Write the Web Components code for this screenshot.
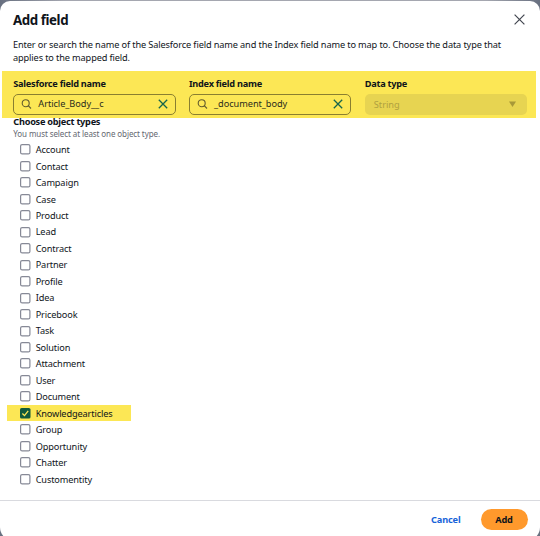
<!DOCTYPE html>
<html lang="en">
<head>
<meta charset="utf-8">
<title>Add field</title>
<style>
  html, body { margin: 0; height: 100%; overflow: hidden; }
  body {
    background: linear-gradient(90deg, #687080, #a5a7b0 12%, #a5a7b0 90%, #687080);
    background-color: #687080;
    font-family: "Noto Sans", "Open Sans", sans-serif;
    font-size: 9.2px;
    color: #0f141a;
  }
</style>
</head>
<body>
<field-modal>
  <span slot="title">Add field</span>
  <span slot="intro">Enter or search the name of the Salesforce field name and the Index field name to map to. Choose the data type that<br>applies to the mapped field.</span>
  <search-field slot="fields" label="Salesforce field name" value="Article_Body__c"></search-field>
  <search-field slot="fields" label="Index field name" value="_document_body"></search-field>
  <select-field slot="fields" label="Data type" value="String"></select-field>
  <object-types slot="types"></object-types>
</field-modal>

<script>
// <field-modal>: dialog frame with title, intro, field row, list and footer
class FieldModal extends HTMLElement {
  constructor() {
    super();
    this.attachShadow({ mode: "open" });
    this.shadowRoot.innerHTML = `
      <style>
        :host { display: block; padding-top: 1px; height: 535px; }
        .box { display: flex; flex-direction: column; box-sizing: border-box;
               height: 540px; background: #fff; border-radius: 10px 10px 14px 14px; }
        header { display: flex; justify-content: space-between; align-items: center;
                 height: 36px; padding: 0 15px 0 13px; }
        h1 { margin: 0; padding-top: 1.4px; font-size: 13.3px; font-weight: 700; line-height: 18px;
             letter-spacing: -.42px; }
        header svg { width: 11px; height: 11px; }
        .intro { margin: 0; padding: 1px 13px 0; line-height: 13.3px; height: 32.5px;
                 white-space: nowrap; letter-spacing: -.125px; }
        .fields { display: flex; gap: 13.5px; box-sizing: border-box; height: 47.3px;
                  margin: 0 4px 0 2px; padding: 6.5px 9px 0 11.3px; background: #fce755; }
        main { flex: 1; }
        footer { display: flex; justify-content: flex-end; align-items: center; gap: 20px;
                 box-sizing: border-box; height: 41px; padding: 0 12.5px 3px 0;
                 border-top: 1px solid #d9dadf; font-weight: 700; letter-spacing: -.15px; }
        .cancel { color: #1764d9; }
        .add { width: 47px; height: 21px; line-height: 21px; border-radius: 11px;
               text-align: center; background: #ff992c; }
      </style>
      <div class="box">
        <header>
          <h1><slot name="title"></slot></h1>
          <svg viewBox="0 0 11 11"><path d="M.6.6l9.8 9.8M10.4.6L.6 10.4" stroke="#424650" stroke-width="1.2"/></svg>
        </header>
        <p class="intro"><slot name="intro"></slot></p>
        <div class="fields"><slot name="fields"></slot></div>
        <main><slot name="types"></slot></main>
        <footer>
          <span class="cancel">Cancel</span>
          <span class="add">Add</span>
        </footer>
      </div>
    `;
  }
}

// <search-field label value>: text input with magnifier and clear icon
class SearchField extends HTMLElement {
  constructor() {
    super();
    this.attachShadow({ mode: "open" });
    this.shadowRoot.innerHTML = `
      <style>
        :host { display: block; flex: 1; }
        .label { font-weight: 700; line-height: 14px; margin-bottom: 2.5px; white-space: nowrap; letter-spacing: -.26px; }
        .input { display: flex; align-items: center; box-sizing: border-box; height: 21px;
                 padding: 0 7px; border: 1.4px solid #8a7f30; border-radius: 5px; color: #2b2b1c; }
        .value { flex: 1; margin-left: 7px; line-height: 18px; letter-spacing: -.04px; }
        svg { width: 10px; height: 10px; fill: none; overflow: visible; }
      </style>
      <div class="label"></div>
      <div class="input">
        <svg viewBox="0 0 10 10" stroke="#625c2e" stroke-width="1.1"><circle cx="4.7" cy="4.2" r="3.5"/><path d="M7.2 6.7L10 9.5"/></svg>
        <span class="value"></span>
        <svg viewBox="0 0 10 10" stroke="#17664b" stroke-width="1.3"><path d="M.8.8l8.4 8.4M9.2.8L.8 9.2"/></svg>
      </div>
    `;
  }

  connectedCallback() {
    this.shadowRoot.querySelector(".label").textContent = this.getAttribute("label");
    this.shadowRoot.querySelector(".value").textContent = this.getAttribute("value");
  }
}

// <select-field label value>: disabled dropdown
class SelectField extends HTMLElement {
  constructor() {
    super();
    this.attachShadow({ mode: "open" });
    this.shadowRoot.innerHTML = `
      <style>
        :host { display: block; flex: 1; }
        .label { font-weight: 700; line-height: 14px; margin-bottom: 2.5px; letter-spacing: -.26px; }
        .select { display: flex; align-items: center; justify-content: space-between;
                  box-sizing: border-box; height: 21px; padding: 0 11px 0 9px;
                  border-radius: 5px; background: #e7d451; color: #b0a140; }
        svg { width: 7px; height: 6px; }
      </style>
      <div class="label"></div>
      <div class="select">
        <span class="value"></span>
        <svg viewBox="0 0 7 6"><path d="M0 .5h7L3.5 6z" fill="#a89838"/></svg>
      </div>
    `;
  }

  connectedCallback() {
    this.shadowRoot.querySelector(".label").textContent = this.getAttribute("label");
    this.shadowRoot.querySelector(".value").textContent = this.getAttribute("value");
  }
}

// <check-item checked>: one checkbox row, highlighted when checked
class CheckItem extends HTMLElement {
  constructor() {
    super();
    this.attachShadow({ mode: "open" });
    this.shadowRoot.innerHTML = `
      <style>
        :host { display: flex; align-items: center; box-sizing: border-box; width: 124px;
                height: 16.475px; margin-left: 7px; padding-left: 13px; gap: 5.2px;
                letter-spacing: -.13px; }
        :host([checked]) { background: #fce755; }
        svg { width: 10.5px; height: 10.5px; overflow: visible; }
        .on { display: none; }
        :host([checked]) .on { display: block; }
        :host([checked]) .off { display: none; }
      </style>
      <svg class="off" viewBox="0 0 10.5 10.5"><rect x=".6" y=".6" width="9.3" height="9.3" rx="1.5" fill="#fff" stroke="#868996" stroke-width="1.2"/></svg>
      <svg class="on" viewBox="0 0 10.5 10.5"><rect width="10.5" height="10.5" rx="1.6" fill="#10593c"/><path d="M2.4 5.5l2.1 2.1 3.7-4.8" fill="none" stroke="#fce755" stroke-width="1.3"/></svg>
      <slot></slot>
    `;
  }
}

// <object-types>: heading, hint and the checkbox list
class ObjectTypes extends HTMLElement {
  constructor() {
    super();
    this.attachShadow({ mode: "open" });
    const types = ["Account", "Contact", "Campaign", "Case", "Product", "Lead", "Contract",
      "Partner", "Profile", "Idea", "Pricebook", "Task", "Solution", "Attachment", "User",
      "Document", "Knowledgearticles", "Group", "Opportunity", "Chatter", "Customentity"];
    this.shadowRoot.innerHTML = `
      <style>
        :host { display: block; }
        .title, .hint { padding-left: 13.3px; line-height: 12px; }
        .title { margin-top: -2px; font-weight: 700; letter-spacing: -.26px; }
        .hint { height: 13.6px; font-size: 8px; color: #656871; letter-spacing: -.09px; }
      </style>
      <div class="title">Choose object types</div>
      <div class="hint">You must select at least one object type.</div>
      ${types.map(t => `<check-item${t === "Knowledgearticles" ? " checked" : ""}>${t}</check-item>`).join("")}
    `;
  }
}

customElements.define("field-modal", FieldModal);
customElements.define("search-field", SearchField);
customElements.define("select-field", SelectField);
customElements.define("check-item", CheckItem);
customElements.define("object-types", ObjectTypes);
</script>
</body>
</html>
